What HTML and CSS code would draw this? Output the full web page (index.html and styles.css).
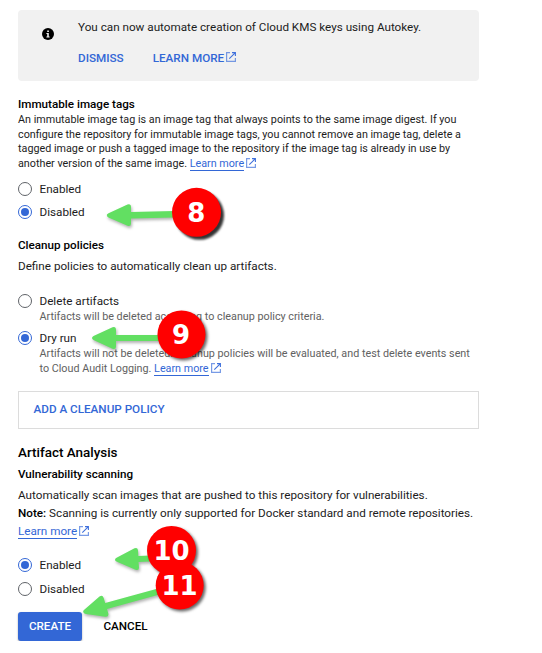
FILE: index.html
```html
<!DOCTYPE html>
<html lang="en">
<head>
<meta charset="utf-8">
<title>Create repository</title>
<link rel="stylesheet" href="styles.css">
</head>
<body>
<svg class="defs" aria-hidden="true">
  <symbol id="ext" viewBox="0 0 10 10">
    <path d="M4 .6H.6v8.800h8.800V6" fill="none" stroke="currentColor" stroke-width="1.200" opacity=".7"/>
    <path d="M6 .6h3.400V4M9.400.6L3.300 6.700" fill="none" stroke="currentColor" stroke-width="1.100"/>
  </symbol>
</svg>
<main class="page">
  <section class="banner">
    <svg class="info" viewBox="0 0 12 12"><circle cx="6" cy="6" r="6"/><path d="M5.2 2.4h1.7v1.5H5.2zM4.4 5h2.4v3.4h.8v1H4.4v-1h.8V6h-.8z" fill="#f1f1f1"/></svg>
    <div class="banner-body">
      <p class="banner-text">You can now automate creation of Cloud KMS keys using Autokey.</p>
      <div class="banner-actions">
        <a class="action">DISMISS</a>
        <a class="action">LEARN MORE<svg class="ext"><use href="#ext"/></svg></a>
      </div>
    </div>
  </section>

  <section class="tags">
    <h3>Immutable image tags</h3>
    <p class="desc">An immutable image tag is an image tag that always points to the same image digest. If you<br>configure the repository for immutable image tags, you cannot remove an image tag, delete a<br>tagged image or push a tagged image to the repository if the image tag is already in use by<br>another version of the same image. <a class="link">Learn more</a><svg class="ext"><use href="#ext"/></svg></p>
    <label class="option tags-on"><i class="radio"></i><span>Enabled</span></label>
    <label class="option tags-off"><i class="radio on"></i><span>Disabled</span></label>
  </section>

  <section class="cleanup">
    <h3>Cleanup policies</h3>
    <p class="body define">Define policies to automatically clean up artifacts.</p>
    <label class="option"><i class="radio"></i><span>Delete artifacts</span></label>
    <p class="hint">Artifacts will be deleted according to cleanup policy criteria.</p>
    <label class="option dry"><i class="radio on"></i><span>Dry run</span></label>
    <p class="hint">Artifacts will not be deleted. Cleanup policies will be evaluated, and test delete events sent<br>to Cloud Audit Logging. <a class="link">Learn more</a><svg class="ext"><use href="#ext"/></svg></p>
    <div class="add"><a class="action">ADD A CLEANUP POLICY</a></div>
  </section>

  <section class="analysis">
    <h2>Artifact Analysis</h2>
    <h3>Vulnerability scanning</h3>
    <p class="body scan">Automatically scan images that are pushed to this repository for vulnerabilities.<br><span class="note"><b>Note:</b> Scanning is currently only supported for Docker standard and remote repositories.</span><br><a class="link">Learn more</a><svg class="ext"><use href="#ext"/></svg></p>
    <label class="option scan-on"><i class="radio on"></i><span>Enabled</span></label>
    <label class="option scan-off"><i class="radio"></i><span>Disabled</span></label>
  </section>

  <div class="buttons">
    <button class="create">CREATE</button>
    <button class="cancel">CANCEL</button>
  </div>
</main>

<svg class="callouts" viewBox="0 0 542 653">
  <g class="arrow">
    <path d="M107 215.5Q106 214.500 108.500 213.200L127.500 204.500Q131 203.500 131 207V212L174 211V217.500L131 218.500V223.500Q131 227 127.500 225.800L108.500 217.500Q107 216.800 107 215.500Z"/>
    <path d="M92 338Q92 336.800 93.500 336L112.500 327.200Q116 326 116 330V335H160V341H116V346.500Q116 350 112.500 348.800L93.500 340Q92 339.200 92 338Z"/>
    <path d="M115 559.700Q115 558.500 117 557.500L134.500 548.300Q138 547 138 550.500L138.300 556L150 555.500V561.500L138.500 562L139 567.500Q139 571 135.500 569.700L117 561.800Q115 561 115 559.700Z"/>
    <path d="M83.500 612.500Q82.500 611 84.500 609.500L99.500 596.500Q102.500 594.500 103.700 598L105.200 603L158 588.500L159.500 594.500L107 609L108.300 613.500Q109 617.300 105 616.700L86 614Q84 613.700 83.500 612.500Z"/>
  </g>
  <g class="badge heavy"><circle cx="196.500" cy="212.300" r="24.500"/></g>
  <g class="badge">
    <circle cx="181.500" cy="334.500" r="24"/>
    <circle cx="171.500" cy="550.500" r="24.500"/>
    <circle cx="179.700" cy="585.500" r="24"/>
  </g>
  <g class="num">
    <text x="196.300" y="221.500">8</text>
    <text x="181" y="343.700">9</text>
    <text x="171.500" y="560">10</text>
    <text x="179.500" y="595">11</text>
  </g>
</svg>
</body>
</html>
```

FILE: styles.css
```css
* { box-sizing: border-box; }
body { margin: 0; background: #fff; color: #1c1c1c; font-family: Roboto, "Liberation Sans", sans-serif; font-size: 11.700px; overflow: hidden; }
h2, h3, p { margin: 0; white-space: nowrap; }
.defs { display: none; }
.page { width: 461px; margin: 10px 0 0 18px; }
.banner { display: flex; height: 71px; background: #f1f1f1; border-radius: 4px; padding: 9px 0 0 24px; }
.info { width: 12px; height: 12px; margin: 9px 24px 0 0; }
.banner-text { line-height: 16px; }
.banner-actions { display: flex; gap: 29px; margin-top: 15px; line-height: 16px; }
.action { color: #3367d6; font-weight: 500; font-size: 11.700px; }
.ext { width: 10px; height: 10px; margin-left: 2px; color: #3f70dc; overflow: visible; vertical-align: -1px; }
.banner .ext { vertical-align: 0; }
.link { color: #3367d6; border-bottom: 1px solid #3367d6; }
h3 { font-size: 11.670px; line-height: 16px; font-weight: 500; color: #000; }
h2 { font-size: 13.440px; line-height: 18px; font-weight: 500; color: #000; }
.tags { margin-top: 15px; }
.desc { font-size: 10.780px; line-height: 14.600px; padding-top: 1px; }
.option { display: flex; align-items: center; height: 16px; gap: 7.500px; }
.radio { width: 14px; height: 14px; border: 1px solid #5f6368; border-radius: 50%; display: flex; align-items: center; justify-content: center; }
.radio.on { border-color: #3367d6; }
.radio.on::after { content: ""; width: 8px; height: 8px; border-radius: 50%; background: #3367d6; }
.tags-on { margin-top: 10px; }
.tags-off { margin-top: 7px; }
.cleanup { margin-top: 17px; }
.body { line-height: 18px; }
.define { margin: 4px 0 18px; }
.hint { margin-left: 21.500px; font-size: 10.780px; line-height: 15px; color: #616161; }
.dry { margin-top: 6px; }
.add { height: 38px; margin-top: 15px; padding: 9px 14.500px; border: 1px solid #dcdcdc; line-height: 16px; }
.analysis { margin-top: 15px; }
.analysis h3 { margin-top: 4px; }
.scan { margin-top: 4px; }
.scan-on { margin-top: 17px; }
.scan-off { margin-top: 8px; }
b { font-weight: 500; color: #000; }
.buttons { display: flex; margin-top: 15px; gap: 21.500px; }
button { border: 0; padding: 0 0 1px; background: none; font: 500 11.650px/27px Roboto, sans-serif; }
.create { width: 64px; height: 29px; border-radius: 3px; color: #fff; background: #3367d6; box-shadow: 0 1px 2px rgba(0,0,0,.35); }
.cancel { color: #000; }
.callouts { position: absolute; left: 0; top: 0; width: 542px; height: 653px; }
.arrow { fill: #62df62; filter: drop-shadow(1px 2px 1.500px rgba(0,0,0,.3)); }
.badge { fill: #f00; filter: drop-shadow(2px 2px 1.500px rgba(0,0,0,.6)); }
.heavy { filter: drop-shadow(3px 3px 1px rgba(0,0,0,.8)); }
.num { fill: #fff; font: bold 26px "DejaVu Sans", sans-serif; text-anchor: middle; }
```
